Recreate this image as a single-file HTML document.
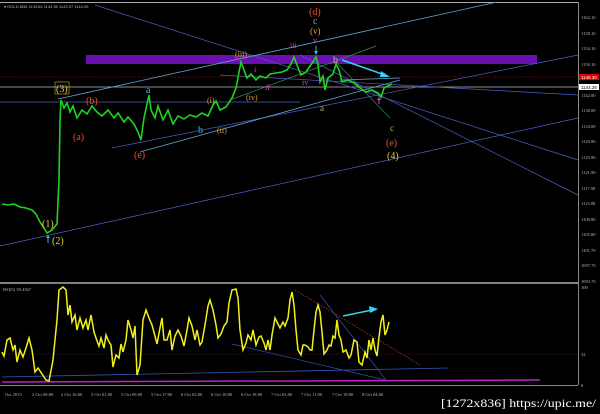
<!DOCTYPE html>
<html><head><meta charset="utf-8"><style>
html,body{margin:0;padding:0;background:#000;width:600px;height:414px;overflow:hidden}
svg{display:block}
text{font-family:"Liberation Serif",serif}
.ax{font-family:"Liberation Sans",sans-serif;font-size:4.5px;fill:#bbb}
</style></head><body>
<svg width="600" height="414" viewBox="0 0 600 414" xmlns="http://www.w3.org/2000/svg">
<rect width="600" height="414" fill="#000"/>
<line x1="0" y1="2.5" x2="578" y2="2.5" stroke="#aaa" stroke-width="1"/>
<line x1="578.5" y1="2" x2="578.5" y2="385" stroke="#888" stroke-width="1"/>
<line x1="0" y1="283" x2="578" y2="283" stroke="#aaa" stroke-width="1.5"/>
<line x1="0" y1="385.5" x2="578" y2="385.5" stroke="#888" stroke-width="1"/>
<text x="4" y="8" class="ax" style="font-size:4px">▾ GOLD,M30  1143.64  1144.55  1143.57  1144.26</text>
<rect x="86" y="55" width="451" height="9" fill="#6a0fb0"/>
<line x1="0" y1="77" x2="578" y2="77" stroke="#c00" stroke-width="0.7" stroke-dasharray="1,1.5"/>
<line x1="0" y1="87" x2="578" y2="87" stroke="#bbb" stroke-width="0.8"/>
<g stroke="#4a5fc8" stroke-width="0.7" fill="none">
<line x1="95" y1="5" x2="578" y2="160"/>
<line x1="0" y1="246" x2="578" y2="118"/>
<line x1="112" y1="148" x2="578" y2="55"/>
<line x1="300" y1="55" x2="578" y2="195"/>
<line x1="220" y1="75" x2="578" y2="95"/>
<line x1="0" y1="102" x2="300" y2="102"/>
</g>
<g stroke="#5fa8d8" stroke-width="0.8" fill="none">
<line x1="58" y1="99" x2="497" y2="2"/>
<line x1="140" y1="152" x2="400" y2="80"/>
<line x1="340" y1="80" x2="400" y2="78"/>
</g>
<g stroke="#3a8a5a" stroke-width="0.7" fill="none">
<line x1="230" y1="100" x2="376" y2="46"/>
<line x1="336" y1="62" x2="390" y2="118"/>
</g>
<line x1="342" y1="60" x2="385" y2="75" stroke="#33d6ee" stroke-width="1.6"/>
<polygon points="390,77 381,71 380,77" fill="#33d6ee"/>
<polyline fill="none" stroke="#1ed41e" stroke-width="1.6" points="2,204 8,205 14,204 20,207 26,208 32,210 36,214 40,222 44,228 47,233 52,230 57,224 59,180 60,120 61,100 64,108 67,103 70,112 73,106 77,118 82,110 87,114 92,106 97,112 102,116 108,110 114,118 118,113 124,122 128,117 134,124 138,132 141,140 144,118 147,104 149,95 151,110 155,118 158,106 163,120 168,110 173,124 178,116 184,119 190,115 196,117 202,113 208,116 213,105 216,101 220,110 226,107 232,98 236,88 239,72 241,62 244,70 247,78 251,74 256,80 260,76 266,78 270,74 276,73 282,72 287,70 291,64 294,57 297,65 301,75 306,72 310,66 313,62 316,57 318,64 320,82 323,76 325,90 328,78 333,74 336,64 339,70 342,82 348,80 354,83 360,88 366,92 372,90 378,93 381,97 384,88 388,86 392,84"/>
<line x1="0" y1="354" x2="578" y2="354" stroke="#552040" stroke-width="0.6" stroke-dasharray="1,1"/>
<line x1="2" y1="377" x2="448" y2="368" stroke="#3c52b8" stroke-width="0.8"/>
<line x1="2" y1="382" x2="540" y2="380" stroke="#c020c8" stroke-width="1.5"/>
<line x1="232" y1="344" x2="385" y2="380" stroke="#3c52b8" stroke-width="0.7"/>
<line x1="320" y1="295" x2="386" y2="380" stroke="#3c52b8" stroke-width="0.7"/>
<line x1="295" y1="290" x2="420" y2="365" stroke="#b04018" stroke-width="0.8" stroke-dasharray="1.5,1.5"/>
<line x1="343" y1="316" x2="372" y2="310" stroke="#33d6ee" stroke-width="1.6"/>
<polygon points="378,309 369,306 370,313" fill="#33d6ee"/>
<polyline fill="none" stroke="#f2f21a" stroke-width="1.5" points="2,352 4,356 7,340 10,338 13,350 15,345 17,362 20,350 23,357 26,348 29,338 32,350 35,372 38,368 42,374 46,380 49,381 53,360 57,320 59,290 63,287 66,290 68,315 70,305 72,322 75,315 77,330 80,318 83,328 86,320 88,330 91,315 94,332 96,338 99,346 101,338 104,348 106,335 108,340 111,345 113,367 116,355 119,358 121,344 123,352 126,340 128,320 131,330 133,338 135,326 137,375 140,365 143,320 146,310 149,318 152,325 155,336 157,344 160,328 162,318 164,340 167,340 170,330 172,350 175,336 178,330 181,336 184,346 187,330 189,318 192,326 195,340 197,330 200,345 202,342 205,325 208,306 210,300 213,310 216,325 218,338 221,334 224,326 227,322 229,303 232,290 236,289 238,298 240,330 243,350 246,343 248,335 251,340 253,330 256,345 259,337 261,336 264,343 266,350 268,340 270,350 272,335 275,318 278,324 280,328 283,322 285,326 288,318 290,300 292,292 294,305 296,330 298,350 301,355 303,345 305,345 308,347 310,350 312,350 314,330 316,312 318,305 320,312 322,332 324,354 327,350 329,345 331,346 333,336 335,338 337,320 339,335 341,340 343,352 346,350 349,358 351,355 354,340 357,342 359,362 362,365 365,352 367,358 369,340 371,350 373,338 375,350 377,356 379,337 381,322 383,315 385,335 387,330 389,322"/>
<g class="ax">
<text x="581" y="19">1162.10</text><text x="581" y="35">1158.10</text><text x="581" y="50">1154.10</text><text x="581" y="66">1150.10</text>
<text x="581" y="97">1142.00</text><text x="581" y="112">1138.00</text><text x="581" y="128">1134.00</text><text x="581" y="143">1129.90</text>
<text x="581" y="159">1125.90</text><text x="581" y="174">1121.90</text><text x="581" y="190">1117.90</text><text x="581" y="205">1113.80</text>
<text x="581" y="221">1109.80</text><text x="581" y="236">1105.80</text><text x="581" y="252">1101.70</text><text x="581" y="267">1097.70</text><text x="581" y="283">1093.70</text>
<text x="581" y="289">100</text><text x="581" y="356">32</text><text x="581" y="387">0</text>
<text x="3" y="291">RSI(5) 59.4367</text>
<text x="5" y="396">Oct 2015</text><text x="32" y="396">2 Oct 08:00</text><text x="61" y="396">2 Oct 16:00</text><text x="91" y="396">5 Oct 01:00</text><text x="121" y="396">5 Oct 09:00</text><text x="151" y="396">5 Oct 17:00</text><text x="181" y="396">6 Oct 02:00</text><text x="211" y="396">6 Oct 10:00</text><text x="241" y="396">6 Oct 18:00</text><text x="271" y="396">7 Oct 03:00</text><text x="301" y="396">7 Oct 11:00</text><text x="332" y="396">7 Oct 19:00</text><text x="362" y="396">8 Oct 04:00</text>
</g>
<rect x="579" y="74" width="20" height="6" fill="#d00"/>
<text x="581" y="79" class="ax" style="fill:#fff">1146.30</text>
<rect x="579" y="84" width="20" height="6" fill="#fff"/>
<text x="581" y="89" class="ax" style="fill:#000">1144.26</text>
<g font-size="10">
<text x="56" y="92" fill="#e8d040">(3)</text>
<rect x="55" y="82" width="14" height="12" fill="none" stroke="#e8d040" stroke-width="0.5"/>
<text x="86" y="104" fill="#f05020">(b)</text>
<text x="73" y="140" fill="#f05020">(a)</text>
<text x="134" y="158" fill="#f05020">(e)</text>
<text x="146" y="93" fill="#33b8e0">a</text>
<text x="198" y="133" fill="#33b8e0">b</text>
<text x="207" y="103" fill="#e0a030" font-size="8">(i)</text>
<text x="217" y="133" fill="#e0a030" font-size="8">(ii)</text>
<text x="235" y="57" fill="#e0a030" font-size="8">(iii)</text>
<text x="246" y="100" fill="#e0a030" font-size="8">(iv)</text>
<text x="254" y="72" fill="#d040d0" font-size="8">i</text>
<text x="265" y="90" fill="#d040d0" font-size="8">ii</text>
<text x="290" y="48" fill="#d040d0" font-size="8">iii</text>
<text x="302" y="85" fill="#d040d0" font-size="8">iv</text>
<text x="309" y="15" fill="#f05020">(d)</text>
<text x="313" y="24" fill="#33b8e0">c</text>
<text x="310" y="34" fill="#e0a030" font-size="9">(v)</text>
<text x="313" y="43" fill="#d040d0" font-size="8">v</text>
<text x="333" y="63" fill="#c8b0a0">b</text>
<text x="320" y="111" fill="#b0c040" font-size="9">a</text>
<text x="390" y="131" fill="#b0c040" font-size="9">c</text>
<text x="386" y="146" fill="#f05020">(e)</text>
<text x="387" y="159" fill="#e8d040">(4)</text>
<text x="42" y="227" fill="#e8d040">(1)</text>
<text x="52" y="244" fill="#e8d040">(2)</text>
</g>
<g stroke-width="1">
<line x1="48" y1="236" x2="48" y2="243" stroke="#33b8e0"/><polygon points="46,238 50,238 48,235" fill="#33b8e0"/>
<line x1="316" y1="46" x2="316" y2="53" stroke="#33b8e0"/><polygon points="314,51 318,51 316,55" fill="#33b8e0"/>
<line x1="379" y1="98" x2="379" y2="104" stroke="#d040d0"/><polygon points="377,100 381,100 379,97" fill="#d040d0"/>
</g>
<text x="441" y="407" font-family="'DejaVu Sans Condensed','DejaVu Sans',sans-serif" font-size="12" fill="#fff" textLength="155" lengthAdjust="spacingAndGlyphs">[1272x836] https://upic.me/</text>
</svg>
</body></html>
